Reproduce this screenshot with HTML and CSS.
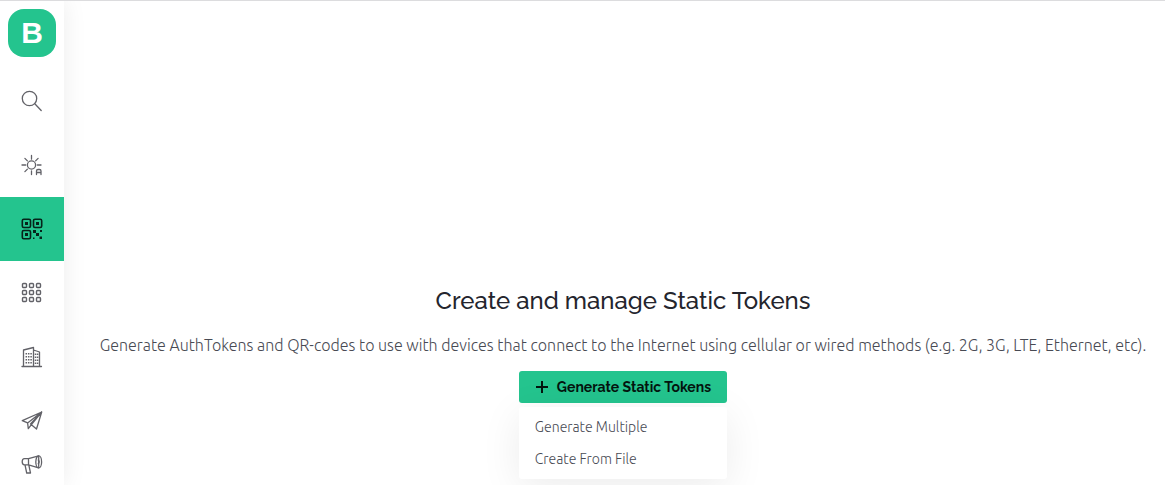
FILE: index.html
```html
<!DOCTYPE html>
<html lang="en">
<head>
<meta charset="utf-8">
<meta name="viewport" content="width=device-width, initial-scale=1">
<title>Static Tokens</title>
<link rel="stylesheet" href="styles.css">
</head>
<body>
<div class="app">
  <nav class="sidebar" aria-label="Main">
    <a class="brand" href="#" aria-label="Home"><span class="logo">B</span></a>
    <a class="nav-item" href="#" aria-label="Search">
      <svg class="icon" viewBox="0 0 24 24"><circle cx="9.500" cy="9.500" r="7.200"/><path d="M14.800 14.800l6.400 6.700"/></svg>
    </a>
    <a class="nav-item" href="#" aria-label="Theme">
      <svg class="icon" viewBox="0 0 24 24"><circle cx="11.500" cy="12" r="4.100"/><path d="M11.500 2.500v3.700M11.500 18v3.500M2 12h3.700M17.300 12H21M4.900 5.400l2.500 2.500M18.100 5.400l-2.500 2.500M4.900 18.600l2.500-2.500M16.500 21.500v-3.500q0-1.500 1.500-1.500h1.500q1.500 0 1.500 1.500v3.500M16.500 19.500h4.500"/></svg>
    </a>
    <a class="nav-item active" href="#" aria-label="Static tokens">
      <svg class="icon" viewBox="0 0 24 24"><g stroke-width="1.6"><rect x="2.300" y="2.300" width="8.200" height="8.200" rx="1.500"/><rect x="13.500" y="2.300" width="8.200" height="8.200" rx="1.500"/><rect x="2.300" y="13.500" width="8.200" height="8.200" rx="1.500"/></g><path class="solid" d="M5 5h3v3H5zM16 5h3v3h-3zM5 16h3v3H5zM13 13h3v3h-3zM16 16h3v3h-3zM20 13h2v2h-2zM19.500 19.500h2.500V22h-2.500zM13 20.500h1.500V22H13z"/></svg>
    </a>
    <a class="nav-item" href="#" aria-label="Templates">
      <svg class="icon" viewBox="0 0 24 24"><g stroke-width="1.4"><rect x="2.500" y="2.500" width="4" height="4" rx="1"/><rect x="9.500" y="2.500" width="4" height="4" rx="1"/><rect x="16.500" y="2.500" width="4" height="4" rx="1"/><rect x="2.500" y="9.500" width="4" height="4" rx="1"/><rect x="9.500" y="9.500" width="4" height="4" rx="1"/><rect x="16.500" y="9.500" width="4" height="4" rx="1"/><rect x="2.500" y="16.500" width="4" height="4" rx="1"/><rect x="9.500" y="16.500" width="4" height="4" rx="1"/><rect x="16.500" y="16.500" width="4" height="4" rx="1"/></g></svg>
    </a>
    <a class="nav-item" href="#" aria-label="Organization">
      <svg class="icon" viewBox="0 0 24 24"><path d="M2 21.500h19.500M3.500 21.500V5L13.500 2.500v19M13.500 5l6 2v14.500"/><path stroke-width="1.500" stroke-linecap="butt" stroke-dasharray="1.500 1.500" d="M6.300 8v11.500M8.700 8v11.500M11.100 8v11.500M15.500 8.500v11M17.600 8.500v11"/></svg>
    </a>
    <a class="nav-item" href="#" aria-label="Messages">
      <svg class="icon" viewBox="0 0 24 24"><path d="M21.700 3L2.300 11.700l5.300 2.200zM21.700 3L7.600 13.900l.7 5.700 2.900-3.700zM21.700 3L10.500 15l6 5z"/></svg>
    </a>
    <a class="nav-item short" href="#" aria-label="Announcements">
      <svg class="icon" viewBox="0 0 24 24"><path d="M8.500 5.700H4.500q-2.300 0-2.300 3t2.300 3.100h4l10.200 3V2.900zM8.500 5.700v6.100M5 11.800l1.700 8.200h3.800l-1.700-8.200"/><ellipse cx="18.700" cy="8.900" rx="2.900" ry="6"/><path d="M18.300 7q1.700 1.900 0 3.800"/></svg>
    </a>
  </nav>
  <main class="content">
    <h1 class="title">Create and manage Static Tokens</h1>
    <p class="description">Generate AuthTokens and QR-codes to use with devices that connect to the Internet using cellular or wired methods (e.g. 2G, 3G, LTE, Ethernet, etc).</p>
    <div class="dropdown">
      <button class="primary" type="button" aria-expanded="true"><svg class="plus" viewBox="0 0 12 12"><path d="M6 0v12M0 6h12"/></svg>Generate Static Tokens</button>
      <div class="menu">
        <button class="menu-item" type="button">Generate Multiple</button>
        <button class="menu-item" type="button">Create From File</button>
      </div>
    </div>
  </main>
</div>
</body>
</html>
```
FILE: styles.css
```css
* { box-sizing: border-box; }
body { margin: 0; background: #fff; font-family: "Noto Sans", sans-serif; }
.app { display: flex; height: 100vh; overflow: hidden; border-top: 1px solid #dcdcde; }
.sidebar { display: flex; flex-direction: column; flex: 0 0 64px; background: #fff; box-shadow: 0 0 24px rgba(0, 0, 0, 0.08); }
.brand { display: flex; flex: 0 0 68px; align-items: flex-start; justify-content: center; padding-top: 8px; text-decoration: none; }
.logo { display: flex; align-items: center; justify-content: center; width: 48px; height: 48px; border-radius: 16px; background: #24c48e; color: #fff; font: bold 30px "Liberation Sans", sans-serif; }
.nav-item { display: flex; flex: 0 0 64px; align-items: center; justify-content: center; color: #626268; }
.nav-item.active { background: #24c48e; color: #06231a; }
.nav-item.short { flex-basis: 20px; }
.icon { width: 24px; height: 24px; fill: none; stroke: currentColor; stroke-width: 1.3; stroke-linejoin: round; stroke-linecap: round; }
.icon .solid { fill: currentColor; stroke: none; }
.content { display: flex; flex: 1; flex-direction: column; align-items: center; min-width: 0; padding: 284px 7px 0 24px; }
.title { margin: 0; color: #24252d; font: 500 24px/32px Raleway, "Open Sans", sans-serif; }
.description { margin: 16px 0 14px; color: #484a53; font: 300 16px/24px Ubuntu, "Noto Sans", sans-serif; text-align: center; white-space: nowrap; }
.dropdown { display: flex; flex-direction: column; gap: 4px; }
.primary { display: flex; align-items: center; gap: 9px; height: 32px; padding: 0 16px 0 17px; border: 0; border-radius: 3px; background: #24c48e; color: #04150f; font: 700 14px Raleway, "Open Sans", sans-serif; }
.plus { width: 12px; height: 12px; fill: none; stroke: currentColor; stroke-width: 2; }
.menu { display: flex; flex-direction: column; padding: 4px 0; border-radius: 3px; background: #fff; box-shadow: 0 8px 40px rgba(0, 0, 0, 0.08); }
.menu-item { height: 32px; padding: 0 16px; border: 0; background: none; color: #484a53; font: 300 14px Ubuntu, "Noto Sans", sans-serif; text-align: left; }
```
